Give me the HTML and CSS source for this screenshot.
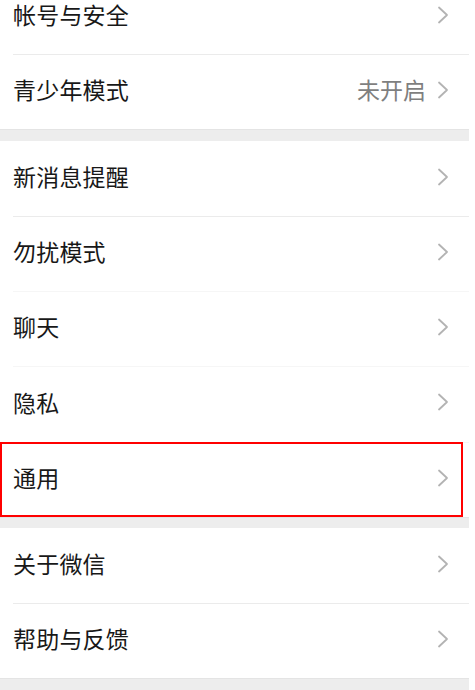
FILE: index.html
```html
<!DOCTYPE html>
<html lang="zh-CN">
<head>
<meta charset="utf-8">
<title>设置</title>
<link rel="stylesheet" href="styles.css">
</head>
<body>
<div class="page">
  <section class="group">
    <div class="row first"><span class="label">帐号与安全</span><span class="right"><svg class="chev" viewBox="0 0 12 18"><polyline points="2,1.5 10,9 2,16.5"/></svg></span></div>
    <div class="row line"><span class="label">青少年模式</span><span class="right"><span class="value">未开启</span><svg class="chev" viewBox="0 0 12 18"><polyline points="2,1.5 10,9 2,16.5"/></svg></span></div>
  </section>
  <div class="gap"></div>
  <section class="group">
    <div class="row"><span class="label">新消息提醒</span><span class="right"><svg class="chev" viewBox="0 0 12 18"><polyline points="2,1.5 10,9 2,16.5"/></svg></span></div>
    <div class="row line"><span class="label">勿扰模式</span><span class="right"><svg class="chev" viewBox="0 0 12 18"><polyline points="2,1.5 10,9 2,16.5"/></svg></span></div>
    <div class="row line faint"><span class="label">聊天</span><span class="right"><svg class="chev" viewBox="0 0 12 18"><polyline points="2,1.5 10,9 2,16.5"/></svg></span></div>
    <div class="row line faint tall"><span class="label">隐私</span><span class="right"><svg class="chev" viewBox="0 0 12 18"><polyline points="2,1.5 10,9 2,16.5"/></svg></span></div>
    <div class="row line faint highlight"><span class="label">通用</span><span class="right"><svg class="chev" viewBox="0 0 12 18"><polyline points="2,1.5 10,9 2,16.5"/></svg></span></div>
  </section>
  <div class="gap gap-small"></div>
  <section class="group">
    <div class="row"><span class="label">关于微信</span><span class="right"><svg class="chev" viewBox="0 0 12 18"><polyline points="2,1.5 10,9 2,16.5"/></svg></span></div>
    <div class="row line"><span class="label">帮助与反馈</span><span class="right"><svg class="chev" viewBox="0 0 12 18"><polyline points="2,1.5 10,9 2,16.5"/></svg></span></div>
  </section>
  <div class="gap gap-end"></div>
</div>
</body>
</html>
```

FILE: styles.css
```css
html, body {
  margin: 0;
  padding: 0;
  background: #ffffff;
}

body {
  font-family: "Noto Sans CJK SC", "Noto Sans", sans-serif;
  overflow: hidden;
  height: 690px;
}

.page {
  width: 469px;
  display: flex;
  flex-direction: column;
}

.group {
  background: #ffffff;
  display: flex;
  flex-direction: column;
}

.row {
  position: relative;
  height: 75px;
  box-sizing: border-box;
  display: flex;
  align-items: center;
  justify-content: space-between;
  padding: 0 20px 4px 13px;
}

.row.first {
  height: 54px;
  padding-bottom: 25px;
}

.row.tall {
  height: 76px;
}

.row.line::before {
  content: "";
  position: absolute;
  left: 13px;
  right: 0;
  top: 0;
  height: 1px;
  background: #ebebeb;
}

.row.faint::before {
  background: #f6f6f6;
}

.label {
  font-size: 23px;
  color: #181818;
  line-height: 1;
  letter-spacing: 0.2px;
}

.right {
  display: flex;
  align-items: center;
  gap: 11px;
}

.value {
  font-size: 23px;
  color: #7f7f7f;
  line-height: 1;
}

.chev {
  width: 12px;
  height: 18px;
  fill: none;
  stroke: #b3b3b3;
  stroke-width: 1.8;
  stroke-linecap: round;
  stroke-linejoin: round;
}

.highlight::after {
  content: "";
  position: absolute;
  left: 0;
  right: 6px;
  top: 0;
  bottom: 0;
  border: 2px solid #ff0000;
}

.gap {
  height: 12px;
  box-sizing: border-box;
  background: #ededed;
  border-top: 1px solid #e4e4e4;
}

.gap-small {
  height: 11px;
}

.gap-end {
  height: 20px;
}
```
